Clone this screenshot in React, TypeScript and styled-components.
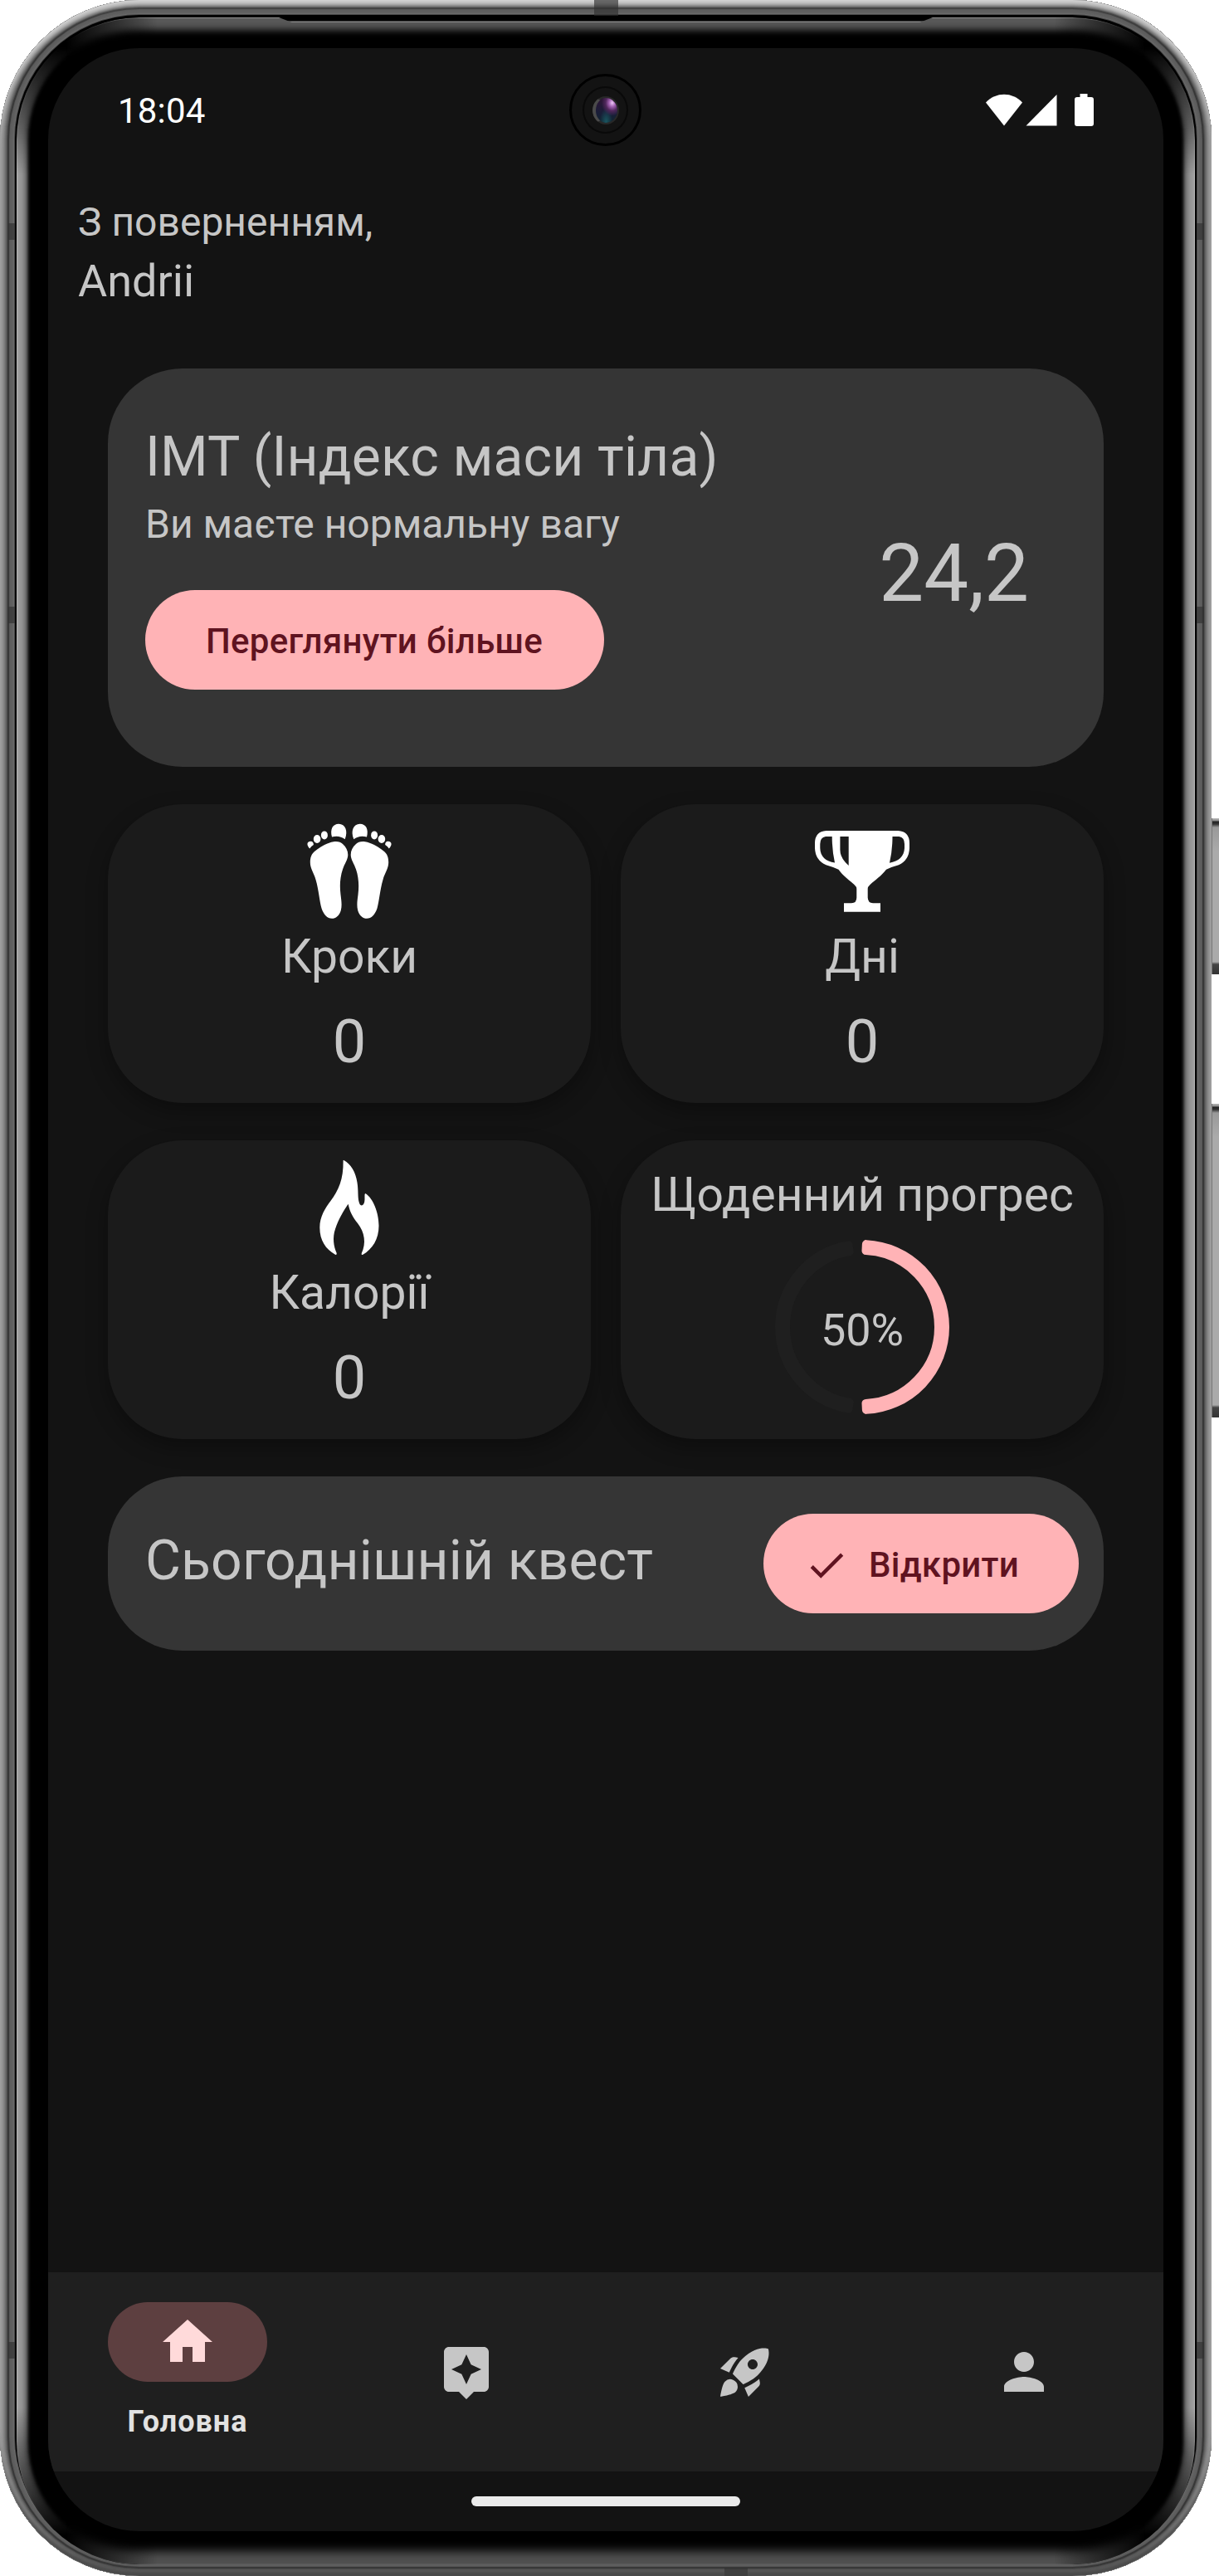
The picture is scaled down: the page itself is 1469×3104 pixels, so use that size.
import React from 'react';
import styled, { createGlobalStyle, css } from 'styled-components';
import { MdAssistant, MdCheck, MdHome, MdPerson, MdRocketLaunch } from 'react-icons/md';

const color = {
  surface: '#131313',
  container: '#353535',
  tile: '#1b1b1b',
  nav: '#1f1f1f',
  text: '#c6c6c6',
  primary: '#ffb3b6',
  onPrimary: '#5f1320',
};

/* Concentric one-pixel rings, listed from the outer edge inwards. */
const rings = (colors: string[], start = 0) =>
  colors.map((c, i) => `inset 0 0 0 ${start + i + 1}px ${c}`).join(', ');

const GlobalStyle = createGlobalStyle`
  body { margin: 0; background: #fff; overflow: hidden; }
  * { box-sizing: border-box; }
`;

const Page = styled.div`
  position: relative;
  width: 1469px;
  height: 3104px;
  overflow: hidden;
  font-family: Roboto, 'Noto Sans', sans-serif;
  color: ${color.text};
`;

const overlay = css`
  content: '';
  position: absolute;
  inset: 0;
  border-radius: inherit;
  pointer-events: none;
`;

const Phone = styled.div`
  position: relative;
  width: 1460px;
  height: 3104px;
  padding: 21px 20px 14px;
  border-radius: 168px;
  background: #000;
  box-shadow: ${rings([
    '#a4a4a4', '#9c9c9c', '#959595', '#8e8e8e', '#868686', '#7b7b7b', '#6e6e6e', '#626262', '#505050',
    '#383838', '#383838', '#565656', '#5e5e5e', '#5e5e5e', '#616161', '#616161', '#6a6a6a', '#484848',
  ])};
  &::before {
    ${overlay}
    box-shadow: inset 0 8px 6px -2px rgba(235, 235, 235, 0.65);
  }
  &::after {
    ${overlay}
    box-shadow: inset 0 -9px 5px -2px rgba(60, 60, 60, 0.85);
  }
`;

const Glass = styled.div`
  position: relative;
  height: 100%;
  padding: 37px 38px 40px;
  border-radius: 148px;
  background: #000;
  &::before {
    ${overlay}
    box-shadow: ${rings([
      '#b4b4b4', '#a0a0a0', '#9c9c9c', '#999', '#979797', '#949494', '#909090', '#8b8b8b', '#848484',
      '#7c7c7c', '#727272', '#646464', '#505050', '#383838', '#202020', '#101010', '#060606',
    ])};
    mask-image: linear-gradient(transparent 36px, #000 190px, #000 2880px, transparent 3034px);
  }
  &::after {
    ${overlay}
    box-shadow: inset 0 1px 0 #929292, inset 0 -1px 0 #5a5a5a,
      inset 0 18px 9px -3px #585858, inset 0 -22px 12px -6px #505050;
    mask-image: linear-gradient(90deg, transparent 60px, #000 170px, #000 1250px, transparent 1360px);
  }
`;

const Speaker = styled.div`
  position: absolute;
  z-index: 2;
  top: 21px;
  left: 336px;
  width: 788px;
  height: 6px;
  background: linear-gradient(#000 4px, #858585 5px);
  clip-path: polygon(0 0, 100% 0, 98% 100%, 2% 100%);
`;

const Seam = styled.i<{ $x: number; $y: number; $w: number; $h: number }>`
  position: absolute;
  left: ${(p) => p.$x}px;
  top: ${(p) => p.$y}px;
  width: ${(p) => p.$w}px;
  height: ${(p) => p.$h}px;
  background: rgba(48, 48, 48, 0.65);
`;

const SideKey = styled.i<{ $y: number; $h: number }>`
  position: absolute;
  left: 1460px;
  top: ${(p) => p.$y}px;
  width: 10px;
  height: ${(p) => p.$h}px;
  border-left: 1px solid #777;
  background: linear-gradient(#bbb, #888 3px, #222 4px, #333 7px, #999 11px, #aaa 40px, #aaa calc(100% - 15px), #444 calc(100% - 12px), #333);
`;

const Screen = styled.div`
  position: relative;
  z-index: 1;
  display: flex;
  flex-direction: column;
  width: 1344px;
  height: 2992px;
  border-radius: 110px;
  overflow: hidden;
  background: ${color.surface};
`;

const StatusBar = styled.div`
  display: flex;
  flex: none;
  align-items: center;
  justify-content: space-between;
  height: 151px;
  padding: 0 84px 0 84px;
  font-size: 42px;
  color: #fff;
  letter-spacing: 0.2px;
`;

const Camera = styled.div`
  position: absolute;
  top: 31px;
  left: 628px;
  display: grid;
  place-items: center;
  width: 87px;
  height: 87px;
  border: 3px solid #000;
  border-radius: 50%;
`;

const CameraRing = styled.div`
  display: grid;
  place-items: center;
  width: 55px;
  height: 57px;
  border: 2px solid #090909;
  border-radius: 50%;
`;

const Lens = styled.div`
  width: 32px;
  height: 34px;
  border: 2px solid #282828;
  border-left: 4px solid #4a4a4a;
  border-radius: 50%;
  background:
    radial-gradient(ellipse at 76% 20%, #f0c8f8 0, #a060b0 14%, #50285c 28%, transparent 46%),
    radial-gradient(ellipse at 48% 95%, #1a5560 0, transparent 40%),
    linear-gradient(#2e1436, #191d38 60%, #102530);
`;

const Greeting = styled.header`
  padding: 26px 36px 0;
`;

const Hello = styled.div`
  font-size: 48px;
  line-height: 66px;
`;

const UserName = styled.div`
  font-size: 54px;
  line-height: 76px;
`;

const Content = styled.main`
  display: flex;
  flex: 1;
  flex-direction: column;
  gap: 45px;
  padding: 67px 72px 0;
`;

const BmiCard = styled.section`
  display: flex;
  justify-content: space-between;
  align-items: center;
  height: 480px;
  padding: 0 90px 0 45px;
  border-radius: 90px;
  background: ${color.container};
`;

const BmiInfo = styled.div`
  display: flex;
  flex-direction: column;
  align-items: flex-start;
  align-self: flex-start;
  padding-top: 62px;
`;

const Title = styled.h2`
  margin: 0;
  font-size: 66px;
  font-weight: 400;
  line-height: 90px;
  letter-spacing: 0.15px;
  white-space: nowrap;
`;

const Subtitle = styled.p`
  margin: 0 0 43px;
  font-size: 48px;
  line-height: 72px;
`;

const BmiValue = styled.div`
  margin-top: 13px;
  font-size: 96px;
  line-height: 112px;
`;

const Button = styled.button<{ $width: number; $withIcon?: boolean }>`
  display: flex;
  align-items: center;
  justify-content: center;
  gap: 24px;
  width: ${(p) => p.$width}px;
  height: 120px;
  padding: 3px ${(p) => (p.$withIcon ? 23 : 1)}px 0 0;
  border: 0;
  border-radius: 60px;
  background: ${color.primary};
  color: ${color.onPrimary};
  font: 500 42px/60px Roboto, 'Noto Sans', sans-serif;
  letter-spacing: 0.3px;
  white-space: nowrap;
`;

const Tiles = styled.div`
  display: grid;
  grid-template-columns: 1fr 1fr;
  gap: 45px 36px;
`;

const Tile = styled.section`
  display: flex;
  flex-direction: column;
  align-items: center;
  height: 360px;
  padding-top: 21px;
  border-radius: 90px;
  background: ${color.tile};
  box-shadow: 0 10px 26px rgba(0, 0, 0, 0.32);
`;

const TileTitle = styled.div`
  margin-top: 6px;
  font-size: 57px;
  line-height: 73px;
  white-space: nowrap;
`;

const TileValue = styled.div`
  margin-top: 19px;
  font-size: 72px;
  line-height: 96px;
`;

const ProgressTitle = styled(TileTitle)`
  margin-top: 8px;
`;

const Progress = styled.div`
  display: grid;
  place-items: center;
  width: 210px;
  height: 210px;
  margin-top: 18px;
  > * {
    grid-area: 1 / 1;
  }
`;

const Percent = styled.span`
  margin-top: 7px;
  font-size: 54px;
  line-height: 72px;
`;

const QuestCard = styled.section`
  display: flex;
  align-items: center;
  justify-content: space-between;
  height: 210px;
  padding: 0 30px 0 45px;
  border-radius: 90px;
  background: ${color.container};
`;

const QuestTitle = styled(Title)`
  margin-bottom: 6px;
`;

const NavBar = styled.nav`
  display: grid;
  flex: none;
  grid-template-columns: repeat(4, 1fr);
  height: 240px;
  background: ${color.nav};
`;

const NavItem = styled.div<{ $active?: boolean }>`
  display: flex;
  flex-direction: column;
  align-items: center;
  justify-content: ${(p) => (p.$active ? 'flex-start' : 'center')};
  padding-top: ${(p) => (p.$active ? 36 : 0)}px;
  color: ${color.text};
`;

const NavPill = styled.div`
  display: grid;
  place-items: center;
  width: 192px;
  height: 96px;
  border-radius: 48px;
  background: #5d3f40;
  color: #ffdada;
`;

const NavLabel = styled.div`
  margin-top: 24px;
  font-size: 36px;
  font-weight: 700;
  line-height: 48px;
  letter-spacing: 1px;
  color: #e2e2e2;
`;

const GestureArea = styled.div`
  display: flex;
  flex: none;
  justify-content: center;
  height: 72px;
  padding-top: 30px;
`;

const GestureHandle = styled.div`
  width: 324px;
  height: 12px;
  border-radius: 6px;
  background: #ebebeb;
`;

const StatusIcons = () => (
  <svg width="130" height="41" viewBox="0 0 130 41" fill="#fff">
    <path d="M0 10.600C12-2.500 32-2.500 44 10.600L22 38.500Z" />
    <path d="M48.500 38.500 85.500 1V38.500Z" />
    <path d="M113.500 0h9v4h4.500q3 0 3 3v29q0 3-3 3h-17q-3 0-3-3V7q0-3 3-3h3.500Z" />
  </svg>
);

const Foot = () => (
  <>
    <path d="M12.800 49.300C12.800 43 14.500 39 18 36C24 31 33 25.500 41 24.200C46 23.500 49.500 24.500 52 27C56 30.500 58.300 35 58.300 40C58.300 46 54 51 52 57.500C48.500 68 48.300 78 49.500 88C50.400 95 51.300 101 49.800 107C48 113.500 43.500 116.800 39 116.800C33.500 116.800 29 112 26.500 104.500C24 96 23.300 83 19.500 70C17.500 62 12.800 57 12.800 49.300Z" />
    <path d="M39 18.500C36.500 9 40 2.700 47.300 2.700C55 2.700 58.800 11 54.700 21.300C50 17.500 44.500 16.800 39 18.500Z" />
    <ellipse cx="29.900" cy="16.400" rx="4" ry="5" />
    <ellipse cx="21.100" cy="21" rx="4.300" ry="5" />
    <path d="M12.200 32.500C8 28 8.700 23.800 13.500 23.800C16 23.800 17 26 16.800 28Q14 29.500 12.200 32.500Z" />
  </>
);

const FeetIcon = () => (
  <svg width="120" height="120" viewBox="0 0 120 120" fill="#fff">
    <Foot />
    <g transform="matrix(-1 0 0 1 120 0)">
      <Foot />
    </g>
  </svg>
);

const TrophyIcon = () => (
  <svg width="120" height="120" viewBox="0 0 120 120" fill="#fff" fillRule="evenodd">
    <path
      d="M16.700 11H103.300Q117 12 117 26V32Q116.500 46.500 104 52.300Q96 54.500 89 57.700C83 65.500 76 70 69.500 76Q66.700 78.500 66.700 81V91.500Q67 98.300 73 98.300H82V108.700H38V98.300H47Q53.300 98.300 53.300 91.500V81Q53.300 78.500 50.500 76C44 70 37 65.500 31.500 57.700Q24 54.500 16.500 52.300Q3.500 46.500 3 32V26Q3 12 16.700 11Z
      M16 18Q9.300 19 9.300 27V32C9.500 42 16 48 27 49.500Q23.700 35 23.700 18Z
      M33.400 18H43.700V53Q33.400 44 33.400 34Z
      M96.500 18H104.500Q111 19 111 27V32C110.500 42 104 48 93 49.700Q96.500 35 96.500 18Z"
    />
  </svg>
);

const FlameIcon = () => (
  <svg width="120" height="120" viewBox="0 0 120 120" fill="#fff">
    <path d="M53.300 3C62 8 67.500 17 69.500 30C71 40 70 47 71.500 53Q72.500 57.500 75 57.500Q78.300 57 78.500 50C78.700 46 78 42.500 79.700 43.300C88.500 49 95.500 66 95.500 82C95.500 98 88 110 76 117Q74 117.500 74.800 115C80.500 103 78.500 90 70 79C64 71.500 60.500 65 58.600 55.800C53 64 47 74 43 86C39.500 96 41 107 44.700 115Q45 117.500 43 116.800C31.500 110 24.300 100 24.300 84C24.300 71 31 60.500 37.500 52C47 39.500 53 26 52.600 4Q52.500 2.500 53.300 3Z" />
  </svg>
);

/* Outline of a ring segment; angles in degrees, clockwise from 12 o'clock. */
const segment = (from: number, to: number, outer: number, inner: number) => {
  const at = (deg: number, r: number) => {
    const a = ((deg - 90) * Math.PI) / 180;
    return `${105 + r * Math.cos(a)} ${105 + r * Math.sin(a)}`;
  };
  return `M${at(from, outer)}A${outer} ${outer} 0 0 1 ${at(to, outer)}L${at(to, inner)}A${inner} ${inner} 0 0 0 ${at(from, inner)}Z`;
};

const ProgressRing = ({ value }: { value: number }) => {
  const end = value * 3.6;
  return (
    <svg width="210" height="210" viewBox="0 0 210 210" strokeWidth="10" strokeLinejoin="round">
      <path d={segment(end + 9.5, 350.5, 100, 92)} fill="#1f1f1f" stroke="#1f1f1f" />
      <path d={segment(2.8, end - 2.8, 100, 92)} fill={color.primary} stroke={color.primary} />
    </svg>
  );
};

const stats = [
  { label: 'Кроки', value: 0, Icon: FeetIcon },
  { label: 'Дні', value: 0, Icon: TrophyIcon },
  { label: 'Калорії', value: 0, Icon: FlameIcon },
];

const seams = [
  [10, 269, 8, 20], [10, 731, 8, 20], [10, 2822, 8, 20],
  [1442, 269, 9, 20], [1442, 731, 9, 20], [1442, 2822, 9, 20],
  [716, 0, 29, 19], [873, 3094, 28, 10],
];

export default function App() {
  return (
    <Page>
      <GlobalStyle />
      <Phone>
        <Glass>
          <Screen>
            <StatusBar>
              <span>18:04</span>
              <Camera>
                <CameraRing>
                  <Lens />
                </CameraRing>
              </Camera>
              <StatusIcons />
            </StatusBar>
            <Greeting>
              <Hello>З поверненням,</Hello>
              <UserName>Andrii</UserName>
            </Greeting>
            <Content>
              <BmiCard>
                <BmiInfo>
                  <Title>ІМТ (Індекс маси тіла)</Title>
                  <Subtitle>Ви маєте нормальну вагу</Subtitle>
                  <Button $width={553}>Переглянути більше</Button>
                </BmiInfo>
                <BmiValue>24,2</BmiValue>
              </BmiCard>
              <Tiles>
                {stats.map(({ label, value, Icon }) => (
                  <Tile key={label}>
                    <Icon />
                    <TileTitle>{label}</TileTitle>
                    <TileValue>{value}</TileValue>
                  </Tile>
                ))}
                <Tile>
                  <ProgressTitle>Щоденний прогрес</ProgressTitle>
                  <Progress>
                    <ProgressRing value={50} />
                    <Percent>50%</Percent>
                  </Progress>
                </Tile>
              </Tiles>
              <QuestCard>
                <QuestTitle>Сьогоднішній квест</QuestTitle>
                <Button $width={380} $withIcon>
                  <MdCheck size={54} />
                  Відкрити
                </Button>
              </QuestCard>
            </Content>
            <NavBar>
              <NavItem $active>
                <NavPill>
                  <MdHome size={72} />
                </NavPill>
                <NavLabel>Головна</NavLabel>
              </NavItem>
              <NavItem>
                <MdAssistant size={72} />
              </NavItem>
              <NavItem>
                <MdRocketLaunch size={72} />
              </NavItem>
              <NavItem>
                <MdPerson size={72} />
              </NavItem>
            </NavBar>
            <GestureArea>
              <GestureHandle />
            </GestureArea>
          </Screen>
        </Glass>
        <Speaker />
        {seams.map(([x, y, w, h]) => (
          <Seam key={`${x}-${y}`} $x={x} $y={y} $w={w} $h={h} />
        ))}
      </Phone>
      <SideKey $y={986} $h={188} />
      <SideKey $y={1330} $h={378} />
    </Page>
  );
}
